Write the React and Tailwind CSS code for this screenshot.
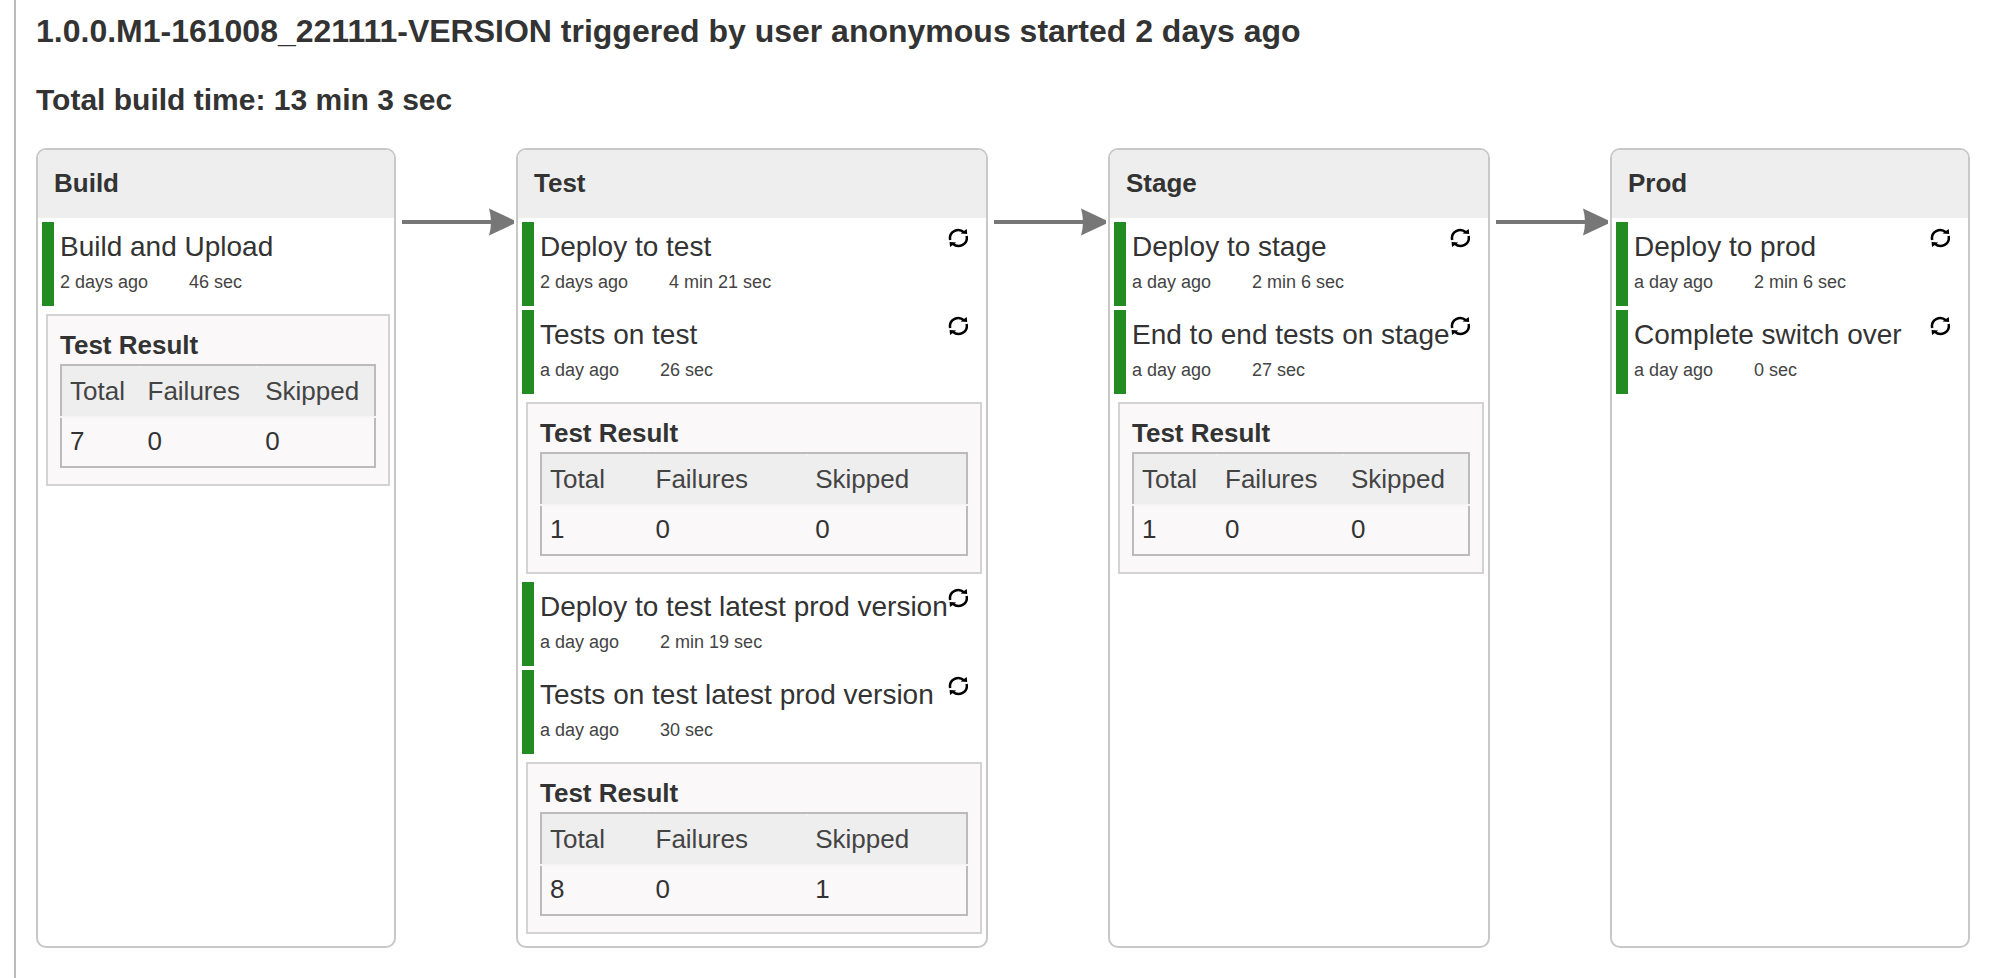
const stages = [
  {
    name: "Build",
    tasks: [
      { name: "Build and Upload", when: "2 days ago", took: "46 sec", tests: [7, 0, 0] },
    ],
  },
  {
    name: "Test",
    tasks: [
      { name: "Deploy to test", when: "2 days ago", took: "4 min 21 sec", rebuild: true },
      { name: "Tests on test", when: "a day ago", took: "26 sec", rebuild: true, tests: [1, 0, 0] },
      { name: "Deploy to test latest prod version", when: "a day ago", took: "2 min 19 sec", rebuild: true },
      { name: "Tests on test latest prod version", when: "a day ago", took: "30 sec", rebuild: true, tests: [8, 0, 1] },
    ],
  },
  {
    name: "Stage",
    tasks: [
      { name: "Deploy to stage", when: "a day ago", took: "2 min 6 sec", rebuild: true },
      { name: "End to end tests on stage", when: "a day ago", took: "27 sec", rebuild: true, tests: [1, 0, 0] },
    ],
  },
  {
    name: "Prod",
    tasks: [
      { name: "Deploy to prod", when: "a day ago", took: "2 min 6 sec", rebuild: true },
      { name: "Complete switch over", when: "a day ago", took: "0 sec", rebuild: true },
    ],
  },
];

function RebuildIcon() {
  return (
    <svg viewBox="0 0 20 20" className="block size-5" aria-hidden="true">
      <g fill="none" stroke="#000" strokeWidth="2.5">
        <path d="M2.2 11.9A8.3 8.1 0 0 1 15.9 4.2" />
        <path d="M18.6 8.1A8.3 8.1 0 0 1 4.9 15.8" />
      </g>
      <path d="M18.8 0.9L19.2 6L12.6 5.6L15.2 3.4Z" />
      <path d="M2 19.1L1.6 14L8.2 14.4L5.6 16.6Z" />
    </svg>
  );
}

function Arrow() {
  return (
    <svg viewBox="0 0 120 28" className="mt-15 block h-7 w-30" aria-hidden="true">
      <path d="M6 12H97V16H6Z" fill="#777" />
      <path d="M93 0.5L118 12.2V15.8L93 27.5Q97 14 93 0.5Z" fill="#777" />
    </svg>
  );
}

function TestResult({ counts }) {
  return (
    <section className="my-1 ml-1 border-2 border-[#d3d3d3] bg-[#faf8f9] px-3 pt-[11px] pb-4">
      <h3 className="pb-px text-[26px] leading-9 font-bold">Test Result</h3>
      <table className="w-full border-collapse border-2 border-[#bbb] text-left text-[26px]">
        <colgroup>
          <col className="w-1/4" />
          <col className="w-3/8" />
          <col className="w-3/8" />
        </colgroup>
        <thead>
          <tr>
            {["Total", "Failures", "Skipped"].map((label) => (
              <th
                key={label}
                scope="col"
                className="rounded-t-sm border-b-2 border-b-[#f5f5f5] bg-[#eee] p-2 leading-[34px] font-normal text-[#444]"
              >
                {label}
              </th>
            ))}
          </tr>
        </thead>
        <tbody>
          <tr>
            {counts.map((count, i) => (
              <td key={i} className="px-2 pt-[7px] pb-[9px] leading-8">
                {count}
              </td>
            ))}
          </tr>
        </tbody>
      </table>
    </section>
  );
}

function Task({ task }) {
  return (
    <li className="flex flex-col gap-1">
      <div className="flex h-21 items-start justify-between border-l-12 border-[#228b22] pr-3.5 pl-1.5">
        <div className="pt-[9px]">
          <div className="text-[28px] leading-8 whitespace-nowrap">{task.name}</div>
          <div className="flex gap-[41px] pt-[7px] text-lg leading-6 whitespace-nowrap text-[#444]">
            <span>{task.when}</span>
            <span>{task.took}</span>
          </div>
        </div>
        {task.rebuild && (
          <button type="button" aria-label={"Rebuild " + task.name} className="mt-1.5 cursor-pointer">
            <RebuildIcon />
          </button>
        )}
      </div>
      {task.tests && <TestResult counts={task.tests} />}
    </li>
  );
}

function Stage({ stage }) {
  return (
    <section className="overflow-hidden rounded-[10px] border-2 border-[#c8c8c8] bg-white">
      <h2 className="bg-[#eee] px-4 pt-[15px] pb-[17px] text-[26px] leading-9 font-bold">{stage.name}</h2>
      <ul className="flex flex-col gap-1 px-1 pt-1 pb-2">
        {stage.tasks.map((task) => (
          <Task key={task.name} task={task} />
        ))}
      </ul>
    </section>
  );
}

export default function App() {
  return (
    <div className="min-h-screen bg-white pl-3.5 font-['Liberation_Sans',Arial,sans-serif] text-[#333]">
      <main className="min-h-screen border-l-2 border-[#bbb] pr-[42px] pb-7 pl-5">
        <h1 className="pt-[11px] text-[32px] leading-10 font-bold whitespace-nowrap">
          1.0.0.M1-161008_221111-VERSION triggered by user anonymous started 2 days ago
        </h1>
        <p className="pt-[29px] text-[30px] leading-10 font-bold">Total build time: 13 min 3 sec</p>
        <div className="mt-7 grid grid-cols-[360fr_120px_472fr_120px_382fr_120px_360fr]">
          {stages.flatMap((stage, i) => [
            i > 0 && <Arrow key={stage.name + "-arrow"} />,
            <Stage key={stage.name} stage={stage} />,
          ])}
        </div>
      </main>
    </div>
  );
}
